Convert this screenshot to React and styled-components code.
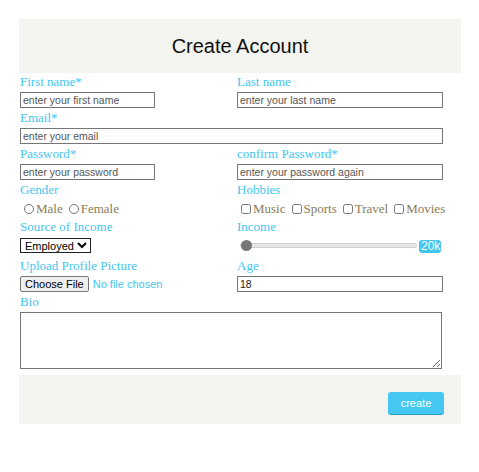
import React from 'react'
import styled, { createGlobalStyle } from 'styled-components'

const colors = {
  $blue: '#42c6f1',
  $panel: '#f3f4ef',
  $choice: '#8a7c56',
  $border: '#767676',
}

const GlobalStyle = createGlobalStyle`
 body{
  margin: 0;
  background: #fff;
  font-family: "Liberation Serif", serif;
 }
`

const Page = styled.div`
 padding: 19px 0 0 19px;
`

const Card = styled.div`
 width: 442px;
`

const Header = styled.header`
 height: 54px;
 background: ${colors.$panel};
 display: flex;
 align-items: center;
 justify-content: center;

 h1{
  margin: 0;
  font-family: "Liberation Sans", Arial, sans-serif;
  font-weight: normal;
  font-size: 20px;
  color: #111;
 }
`

const Form = styled.form`
 display: grid;
 grid-template-columns: 217px 206px;
 row-gap: 2px;
 padding: 1px 0 0 1px;
`

const Field = styled.div`
 display: flex;
 flex-direction: column;
 align-items: flex-start;
 grid-column: ${p => (p.wide ? '1 / -1' : 'auto')};
`

const Label = styled.label`
 display: block;
 font-size: 13px;
 line-height: 15px;
 color: ${colors.$blue};
 margin-bottom: 3px;
`

const TextInput = styled.input`
 box-sizing: border-box;
 width: ${p => p.w || '100%'};
 height: 16px;
 margin: 0;
 padding: 0 2px;
 border: 1px solid ${colors.$border};
 border-radius: 0;
 font-family: "Liberation Sans", Arial, sans-serif;
 font-size: 10.5px;
 color: #222;
 outline: none;

 &::placeholder{
  color: #555;
 }
`

const Choices = styled.div`
 display: flex;
 align-items: center;
 height: 17px;
 font-size: 13px;
 color: ${colors.$choice};

 label{
  display: flex;
  align-items: center;
  margin-right: 2px;
 }

 input{
  width: 10px;
  height: 10px;
  margin: 0 2px 0 4px;
 }
`

const ControlRow = styled.div`
 display: flex;
 align-items: flex-start;
 height: 19px;
 width: 100%;
`

const Select = styled.select`
 margin: 1px 0 0;
 height: 15px;
 padding: 0;
 border: 1px solid #222;
 border-radius: 0;
 background: #fff;
 font-family: "Liberation Sans", Arial, sans-serif;
 font-size: 11px;
 color: #000;
`

const Range = styled.input`
 -webkit-appearance: none;
 appearance: none;
 width: 177px;
 height: 11px;
 margin: 3px 2px 0 3px;
 background: transparent;

 &::-webkit-slider-runnable-track{
  height: 5px;
  background: #e6e6e6;
  border: 1px solid #cfcfcf;
  border-radius: 4px;
 }

 &::-webkit-slider-thumb{
  -webkit-appearance: none;
  width: 11px;
  height: 11px;
  margin-top: -4px;
  border-radius: 50%;
  background: #777;
 }
`

const Output = styled.output`
 box-sizing: border-box;
 width: 22px;
 height: 13px;
 margin-top: 3px;
 padding-left: 2px;
 overflow: hidden;
 white-space: nowrap;
 border-radius: 3px;
 background: ${colors.$blue};
 color: #fff;
 font-family: "Liberation Sans", Arial, sans-serif;
 font-size: 12px;
 line-height: 13px;
`

const FileInput = styled.input`
 height: 16px;
 margin: 0;
 font-family: "Liberation Sans", Arial, sans-serif;
 font-size: 11px;
 color: ${colors.$blue};

 &::file-selector-button{
  height: 16px;
  font: inherit;
  color: #000;
  padding: 0 4px;
  margin-right: 4px;
  border: 1px solid ${colors.$border};
  border-radius: 2px;
  background: #efefef;
 }
`

const TextArea = styled.textarea`
 box-sizing: border-box;
 width: 422px;
 height: 57px;
 margin: 0;
 border: 1px solid ${colors.$border};
 border-radius: 0;
`

const Footer = styled.footer`
 margin-top: 6px;
 height: 49px;
 box-sizing: border-box;
 padding: 17px 17px 0 0;
 background: ${colors.$panel};
 display: flex;
 justify-content: flex-end;
 align-items: flex-start;
`

const Button = styled.button`
 width: 56px;
 height: 23px;
 border: none;
 border-bottom: 1px solid #2b9fc6;
 border-radius: 3px;
 background: #44c8f2;
 color: #fff;
 font-family: "Liberation Sans", Arial, sans-serif;
 font-size: 11px;
 cursor: pointer;
`

const App = () => {
 return (
  <Page>
   <GlobalStyle />
   <Card>
    <Header>
     <h1>Create Account</h1>
    </Header>

    <Form onSubmit={e => e.preventDefault()}>
     <Field>
      <Label>First name*</Label>
      <TextInput w="135px" placeholder="enter your first name" />
     </Field>
     <Field>
      <Label>Last name</Label>
      <TextInput placeholder="enter your last name" />
     </Field>

     <Field wide>
      <Label>Email*</Label>
      <TextInput placeholder="enter your email" />
     </Field>

     <Field>
      <Label>Password*</Label>
      <TextInput w="135px" type="password" placeholder="enter your password" />
     </Field>
     <Field>
      <Label>confirm Password*</Label>
      <TextInput type="password" placeholder="enter your password again" />
     </Field>

     <Field>
      <Label>Gender</Label>
      <Choices>
       <label><input type="radio" name="gender" />Male</label>
       <label><input type="radio" name="gender" />Female</label>
      </Choices>
     </Field>
     <Field>
      <Label>Hobbies</Label>
      <Choices>
       <label><input type="checkbox" />Music</label>
       <label><input type="checkbox" />Sports</label>
       <label><input type="checkbox" />Travel</label>
       <label><input type="checkbox" />Movies</label>
      </Choices>
     </Field>

     <Field>
      <Label>Source of Income</Label>
      <ControlRow>
       <Select defaultValue="employed">
        <option value="employed">Employed</option>
        <option value="business">Business</option>
        <option value="student">Student</option>
       </Select>
      </ControlRow>
     </Field>
     <Field>
      <Label>Income</Label>
      <ControlRow>
       <Range type="range" min="20" max="200" defaultValue="20" />
       <Output>20k</Output>
      </ControlRow>
     </Field>

     <Field>
      <Label>Upload Profile Picture</Label>
      <FileInput type="file" />
     </Field>
     <Field>
      <Label>Age</Label>
      <TextInput type="number" defaultValue="18" />
     </Field>

     <Field wide>
      <Label>Bio</Label>
      <TextArea />
     </Field>
    </Form>

    <Footer>
     <Button type="button">create</Button>
    </Footer>
   </Card>
  </Page>
 )
}

export default App
